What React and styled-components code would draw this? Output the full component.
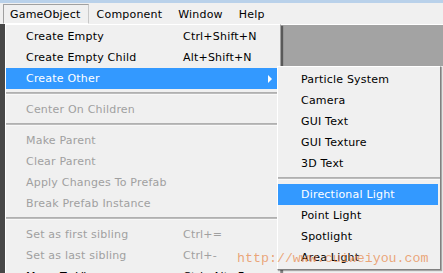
import styled, { createGlobalStyle } from "styled-components";

const GlobalStyle = createGlobalStyle`
  html, body {
    margin: 0;
    padding: 0;
    overflow: hidden;
    background: #f0f0f0;
  }
`

const mainItems = [
    {label: "Create Empty", shortcut: "Ctrl+Shift+N"},
    {label: "Create Empty Child", shortcut: "Alt+Shift+N"},
    {label: "Create Other", active: true, arrow: true},
    {separator: true},
    {label: "Center On Children", disabled: true},
    {separator: true},
    {label: "Make Parent", disabled: true},
    {label: "Clear Parent", disabled: true},
    {label: "Apply Changes To Prefab", disabled: true},
    {label: "Break Prefab Instance", disabled: true},
    {separator: true},
    {label: "Set as first sibling", shortcut: "Ctrl+=", disabled: true},
    {label: "Set as last sibling", shortcut: "Ctrl+-", disabled: true},
    {label: "Move To View", shortcut: "Ctrl+Alt+F"},
]

const subItems = [
    {label: "Particle System"},
    {label: "Camera"},
    {label: "GUI Text"},
    {label: "GUI Texture"},
    {label: "3D Text"},
    {separator: true},
    {label: "Directional Light", active: true},
    {label: "Point Light"},
    {label: "Spotlight"},
    {label: "Area Light"},
]

function App() {
    return (
        <>
            <GlobalStyle/>
            <Screen>
                <TitleStrip/>
                <MenuBar>
                    <MenuTitle $open>GameObject</MenuTitle>
                    <MenuTitle>Component</MenuTitle>
                    <MenuTitle>Window</MenuTitle>
                    <MenuTitle>Help</MenuTitle>
                </MenuBar>
                <Body>
                    <LeftEdge/>
                    <Dropdown>
                        {mainItems.map((item, i) =>
                            item.separator ? (
                                <Separator key={i}/>
                            ) : (
                                <Item key={i} $active={item.active} $disabled={item.disabled}>
                                    <Label>{item.label}</Label>
                                    {item.shortcut && <Shortcut>{item.shortcut}</Shortcut>}
                                    {item.arrow && <Arrow/>}
                                </Item>
                            )
                        )}
                    </Dropdown>
                    <RightColumn>
                        <SceneView/>
                        <Submenu>
                            {subItems.map((item, i) =>
                                item.separator ? (
                                    <Separator key={i}/>
                                ) : (
                                    <SubItem key={i} $active={item.active}>{item.label}</SubItem>
                                )
                            )}
                        </Submenu>
                    </RightColumn>
                </Body>
                <Watermark>http://www.cuiweiyou.com</Watermark>
            </Screen>
        </>
    )
}

const Screen = styled.div`
  position: relative;
  width: 443px;
  height: 273px;
  overflow: hidden;
  display: flex;
  flex-direction: column;
  background: #f0f0f0;
  font-family: "DejaVu Sans", Tahoma, sans-serif;
  font-size: 11px;
  letter-spacing: 0.2px;
  color: #000;
`

const TitleStrip = styled.div`
  flex-shrink: 0;
  height: 3px;
  background: #b9d1ea;
`

const MenuBar = styled.div`
  flex-shrink: 0;
  display: flex;
  align-items: stretch;
  height: 21px;
  padding-left: 3px;
  background: #f0f0f0;
`

const MenuTitle = styled.div`
  display: flex;
  align-items: center;
  padding: 0 7px 0 6px;
  margin: 1px 1px 0 0;
  border: 1px solid ${p => (p.$open ? "#a0a0a0" : "transparent")};
  border-right-color: ${p => (p.$open ? "#c8c8c8" : "transparent")};
  border-bottom-color: ${p => (p.$open ? "#ffffff" : "transparent")};
`

const Body = styled.div`
  flex: 1;
  display: flex;
  align-items: flex-start;
  min-height: 0;
`

const LeftEdge = styled.div`
  align-self: stretch;
  width: 5px;
  background: #474747;
`

const Dropdown = styled.div`
  position: relative;
  flex-shrink: 0;
  width: 274px;
  padding-top: 1px;
  background: #f0f0f0;
  border-top: 1px solid #ffffff;
  border-left: 1px solid #ffffff;
  border-right: 1px solid #a0a0a0;
  box-shadow: 2px 2px 1px rgba(0, 0, 0, 0.45);
`

const Item = styled.div`
  display: flex;
  align-items: center;
  height: 21px;
  padding-left: 20px;
  margin-right: 3px;
  background: ${p => (p.$active ? "#3399ff" : "transparent")};
  color: ${p => (p.$active ? "#ffffff" : p.$disabled ? "#a0a0a0" : "#000000")};
`

const Label = styled.span`
  width: 157px;
  white-space: nowrap;
`

const Shortcut = styled.span`
  white-space: nowrap;
`

const Arrow = styled.span`
  margin-left: auto;
  margin-right: 5px;
  width: 0;
  height: 0;
  border-top: 4px solid transparent;
  border-bottom: 4px solid transparent;
  border-left: 4px solid #ffffff;
`

const Separator = styled.div`
  height: 1px;
  margin: 3px 0 4px;
  background: #bcbcbc;
  border-top: 1px solid #b0b0b0;
  border-bottom: 1px solid #f8f8f8;
`

const RightColumn = styled.div`
  flex: 1;
  display: flex;
  flex-direction: column;
  min-width: 0;
`

const SceneView = styled.div`
  height: 41px;
  background: #a3a3a3;
  border-top: 1px solid #ffffff;
`

const Submenu = styled.div`
  position: relative;
  z-index: 1;
  width: 162px;
  margin-left: -4px;
  padding: 2px 0 1px;
  background: #f0f0f0;
  border-top: 1px solid #ffffff;
  border-left: 1px solid #ffffff;
  border-right: 1px solid #808080;
  border-bottom: 1px solid #808080;
  box-shadow: 1px 1px 1px rgba(0, 0, 0, 0.3);
`

const SubItem = styled.div`
  display: flex;
  align-items: center;
  height: 21px;
  padding-left: 23px;
  margin-right: 2px;
  white-space: nowrap;
  background: ${p => (p.$active ? "#3399ff" : "transparent")};
  color: ${p => (p.$active ? "#ffffff" : "#000000")};
`

const Watermark = styled.div`
  position: absolute;
  left: 237px;
  top: 251px;
  z-index: 2;
  font-family: "Liberation Mono", "Courier New", monospace;
  font-size: 13.3px;
  letter-spacing: 0;
  color: rgba(232, 140, 80, 0.75);
  white-space: nowrap;
  pointer-events: none;
`

export default App;
